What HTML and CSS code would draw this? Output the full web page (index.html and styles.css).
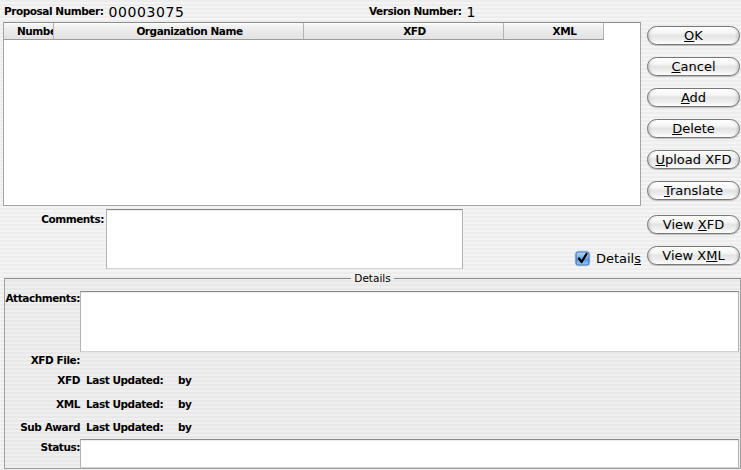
FILE: index.html
```html
<!DOCTYPE html>
<html>
<head>
<meta charset="utf-8">
<link rel="stylesheet" href="styles.css">
</head>
<body>
<div class="window">
  <div class="top">
    <div class="field"><span class="lbl">Proposal Number:</span><span class="val">00003075</span></div>
    <div class="field"><span class="lbl">Version Number:</span><span class="val">1</span></div>
  </div>
  <div class="main">
    <div class="left">
      <div class="table">
        <div class="thead">
          <div class="th c1">Number</div>
          <div class="th c2">Organization Name</div>
          <div class="th c3">XFD</div>
          <div class="th c4">XML</div>
          <div class="th-fill"></div>
        </div>
      </div>
      <div class="comments-row">
        <div class="lbl clbl">Comments:</div>
        <div class="textbox comments"></div>
        <div class="details-check">
          <svg class="cb" width="17" height="17" viewBox="0 0 17 17">
            <defs>
              <linearGradient id="cbg" x1="0" y1="0" x2="0" y2="1">
                <stop offset="0" stop-color="#b9d7f6"/>
                <stop offset="0.5" stop-color="#6ea7e6"/>
                <stop offset="0.55" stop-color="#4f8fdc"/>
                <stop offset="1" stop-color="#9cd0fa"/>
              </linearGradient>
            </defs>
            <rect x="0.5" y="0.5" width="16" height="16" rx="4" fill="#a9c8ef" opacity="0.55"/>
            <rect x="2" y="2" width="13" height="13" rx="2" fill="url(#cbg)" stroke="#3f6fb5"/>
            <path d="M5 8.5 L7.6 12 L12.5 4" fill="none" stroke="#000" stroke-width="2.2" stroke-linecap="round" stroke-linejoin="round"/>
          </svg>
          <span>Detail<u>s</u></span>
        </div>
      </div>
    </div>
    <div class="buttons">
      <div class="btn"><u>O</u>K</div>
      <div class="btn"><u>C</u>ancel</div>
      <div class="btn"><u>A</u>dd</div>
      <div class="btn"><u>D</u>elete</div>
      <div class="btn"><u>U</u>pload XFD</div>
      <div class="btn"><u>T</u>ranslate</div>
      <div class="btn sep">View <u>X</u>FD</div>
      <div class="btn">View X<u>M</u>L</div>
    </div>
  </div>
  <fieldset class="group">
    <legend>Details</legend>
    <div class="row att">
      <div class="lbl rl">Attachments:</div>
      <div class="textbox wide att-box"></div>
    </div>
    <div class="row info r1">
      <div class="lbl rl">XFD File:</div>
    </div>
    <div class="row info r2">
      <div class="lbl rl">XFD</div><div class="lbl lu">Last Updated:</div><div class="lbl">by</div>
    </div>
    <div class="row info r3">
      <div class="lbl rl">XML</div><div class="lbl lu">Last Updated:</div><div class="lbl">by</div>
    </div>
    <div class="row info r4">
      <div class="lbl rl">Sub Award</div><div class="lbl lu">Last Updated:</div><div class="lbl">by</div>
    </div>
    <div class="row status">
      <div class="lbl rl">Status:</div>
      <div class="textbox wide status-box"></div>
    </div>
  </fieldset>
</div>
</body>
</html>
```
FILE: styles.css
```css
html, body {
  margin: 0;
  padding: 0;
}
body {
  width: 741px;
  height: 470px;
  overflow: hidden;
  font-family: "DejaVu Sans", "Noto Sans", sans-serif;
  color: #000;
  background: repeating-linear-gradient(to bottom, #ededed 0, #ededed 2px, #f4f4f4 2px, #f4f4f4 4px);
}
.window {
  width: 741px;
  height: 470px;
}
.lbl {
  font-weight: bold;
  font-size: 10.5px;
  letter-spacing: -0.45px;
  line-height: 12px;
  white-space: nowrap;
}
.top {
  display: grid;
  grid-template-columns: 365px 1fr;
  padding-left: 4px;
  height: 22px;
}
.field {
  display: flex;
  align-items: center;
  gap: 5px;
  height: 21px;
}
.val {
  font-size: 14px;
  letter-spacing: 0.6px;
  line-height: 16px;
  padding-top: 2px;
}
.main {
  display: flex;
  height: 247px;
}
.left {
  width: 638px;
  margin-left: 3px;
  display: flex;
  flex-direction: column;
  gap: 3px;
}
.table {
  height: 184px;
  box-sizing: border-box;
  border: 1px solid #a4a4a4;
  border-top-color: #8c8c8c;
  background: #fff;
}
.thead {
  display: flex;
  height: 17px;
}
.th {
  box-sizing: border-box;
  flex: none;
  height: 17px;
  border-right: 1px solid #b4b4b4;
  border-bottom: 1px solid #9c9c9c;
  background: linear-gradient(#ffffff, #f0f0f0 20%, #e9e9e9 60%, #e2e2e2);
  font-weight: bold;
  font-size: 10.5px;
  letter-spacing: -0.45px;
  line-height: 16px;
  text-align: center;
  white-space: nowrap;
  overflow: hidden;
  padding-left: 22px;
}
.c1 { width: 50px; padding-left: 13px; text-align: left; }
.c2 { width: 250px; }
.c3 { width: 200px; }
.c4 { width: 100px; }
.th-fill { flex: 1; }
.comments-row {
  display: flex;
  height: 60px;
}
.clbl {
  width: 101px;
  text-align: right;
  padding-top: 4px;
  flex: none;
}
.textbox {
  box-sizing: border-box;
  background: #fff;
  border: 1px solid #b4b4b4;
  border-top-color: #8a8a8a;
  border-bottom-color: #d2d2d2;
  box-shadow: inset 0 1px 1px rgba(0,0,0,0.08);
  flex: none;
}
.comments {
  width: 357px;
  height: 60px;
  margin-left: 2px;
}
.details-check {
  margin-left: auto;
  align-self: flex-end;
  margin-bottom: 2px;
  display: flex;
  align-items: center;
  gap: 5px;
  font-size: 13px;
  line-height: 17px;
}
.cb { display: block; }
.buttons {
  margin-left: 6px;
  width: 93px;
  display: flex;
  flex-direction: column;
  padding-top: 4px;
  gap: 12px;
}
.btn {
  box-sizing: border-box;
  height: 19px;
  width: 93px;
  border: 1px solid #777;
  border-radius: 10px;
  background: linear-gradient(#ffffff 0%, #f6f6f6 35%, #e4e4e4 50%, #eeeeee 75%, #ffffff 100%);
  box-shadow: 0 1px 1px rgba(0,0,0,0.22), inset 3px 0 3px -2px rgba(0,0,0,0.18), inset -3px 0 3px -2px rgba(0,0,0,0.18);
  font-size: 13px;
  line-height: 17px;
  text-align: center;
  white-space: nowrap;
}
.btn.sep { margin-top: 3px; }
.group {
  margin: 3px 0 0 4px;
  padding: 0;
  width: 737px;
  box-sizing: border-box;
  border: 1px solid #a0a0a0;
  border-top-color: #8c8c8c;
  background: rgba(0,0,0,0.018);
  min-width: 0;
}
.group legend {
  margin: 0 auto;
  padding: 0 3px;
  font-size: 10.5px;
  line-height: 12px;
}
.row {
  display: flex;
}
.rl {
  width: 75px;
  text-align: right;
  flex: none;
}
.att {
  margin-top: 7px;
  height: 61px;
}
.att .rl { padding-top: 1px; }
.wide {
  width: 659px;
}
.att-box { height: 61px; }
.info { align-items: center; }
.r1 { height: 16px; }
.r2 { height: 24px; }
.r3 { height: 23px; }
.r4 { height: 24px; }
.lu {
  margin-left: 6px;
  width: 92px;
}
.status { height: 29px; }
.status .rl { padding-top: 2px; }
.status-box { height: 29px; }
```
